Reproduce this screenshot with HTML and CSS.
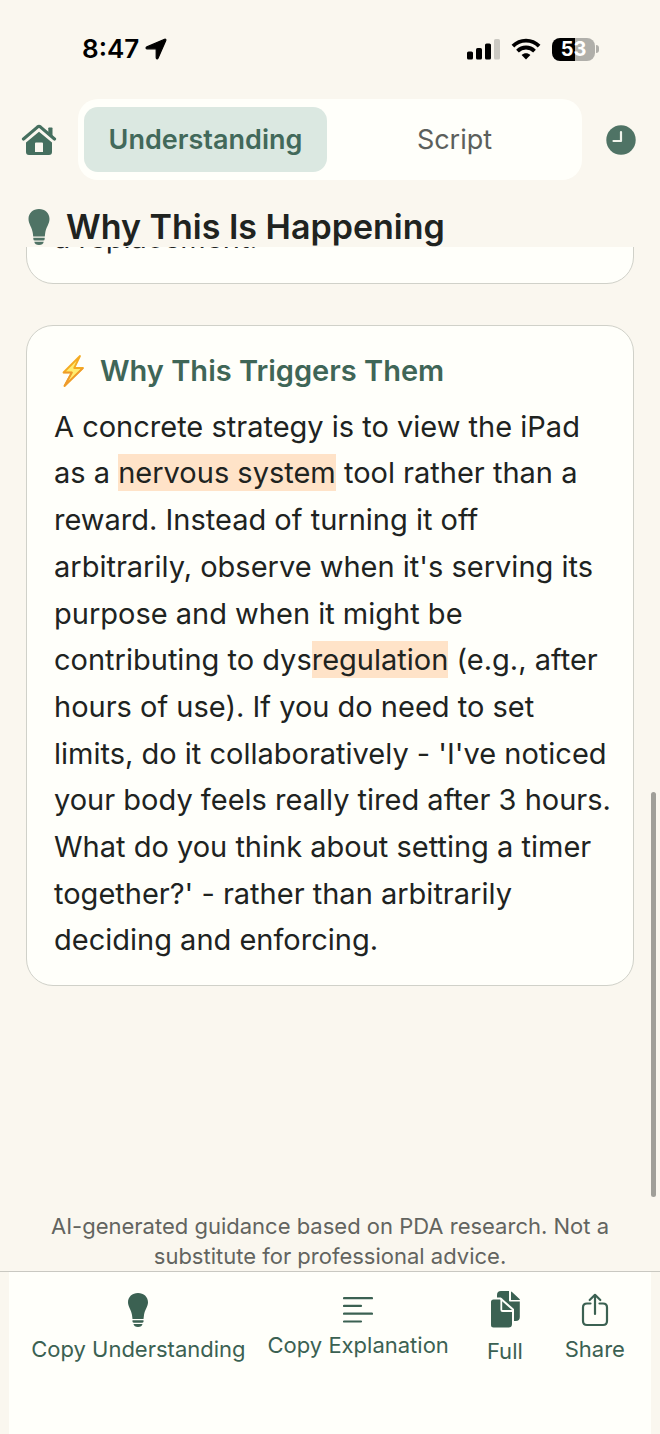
FILE: index.html
```html
<!DOCTYPE html>
<html lang="en">
<head>
<meta charset="utf-8">
<meta name="viewport" content="width=device-width, initial-scale=1">
<title>Why This Is Happening</title>
<link rel="stylesheet" href="styles.css">
</head>
<body>
<div class="app">
  <div class="status">
    <div class="status-group">
      <span class="time">8:47</span>
      <svg class="location" viewBox="0 0 22 22" width="22" height="22" aria-hidden="true"><path stroke="#000" stroke-width="1.200" stroke-linejoin="round" d="M19.600 1.200 1.900 8.900C.600 9.500.900 10.800 2.200 10.800H10.400c.5 0 .8.300.8.800V19.600c0 1.400 1.300 1.700 1.900.3L20.800 2.500C21.200 1.500 20.500.8 19.600 1.200Z"/></svg>
    </div>
    <div class="status-group status-right">
      <svg viewBox="0 0 33 21" width="33" height="21" aria-hidden="true"><rect x="0" y="12.500" width="6" height="8" rx="1.600"/><rect x="9" y="9" width="6" height="11.500" rx="1.600"/><rect x="18" y="4.500" width="6" height="16" rx="1.600"/><rect x="27" y="0" width="6" height="20.500" rx="1.600" fill="#cbc9c2"/></svg>
      <svg viewBox="0 0 30 22" width="30" height="22" aria-hidden="true"><g fill="none" stroke="#000" stroke-width="3.800"><path d="M1.900 8.100C9.200.800 20.800.800 28.100 8.100"/><path d="M6.500 13.100C11.300 8.300 18.700 8.300 23.500 13.100"/></g><path d="M10.600 17C13.200 14.600 16.800 14.600 19.400 17L15 21.500Z"/></svg>
      <div class="battery"><span class="battery-body">53</span><span class="battery-tip"></span></div>
    </div>
  </div>

  <nav class="topbar">
    <button class="icon-button" aria-label="Home">
      <svg viewBox="0 0 36 32" width="36" height="32" aria-hidden="true"><path fill="none" stroke="#456f5f" stroke-width="3.200" stroke-linecap="round" stroke-linejoin="round" d="M2.500 15 16.400 3.100Q18 1.800 19.600 3.100L33.500 15"/><path fill="#456f5f" d="M27.300 4.200q0-.8.8-.8h2.600q.8 0 .8.800v9l-4.200-3.600Z"/><path fill="#456f5f" fill-rule="evenodd" d="M18 7.800 31 18.500V28q0 3-3 3H8q-3 0-3-3V18.500ZM14 19.500v8.500h8v-8.500q0-1-1-1h-6q-1 0-1 1Z"/></svg>
    </button>
    <div class="tabs" role="tablist">
      <button class="tab tab-active" role="tab" aria-selected="true">Understanding</button>
      <button class="tab" role="tab" aria-selected="false">Script</button>
    </div>
    <button class="icon-button" aria-label="History">
      <svg viewBox="0 0 30 30" width="30" height="30" aria-hidden="true"><circle cx="15" cy="15" r="14.700" fill="#4f7365"/><path d="M15 7v9H7.500" fill="none" stroke="#f1f4ec" stroke-width="2.200" stroke-linecap="round" stroke-linejoin="round"/></svg>
    </button>
  </nav>

  <header class="heading">
    <svg viewBox="0 0 22 38" width="22" height="38" aria-hidden="true" fill="#4f7365"><path d="M11 1C5 1 .5 5 .5 11c0 5 3.500 8 4.300 14l.4 3.500h11.600l.4-3.500c.8-6 4.300-9 4.300-14C21.500 5 17 1 11 1Z"/><path d="M5.300 29.800h11.400v1.100q0 1.500-1.500 1.500H6.800q-1.500 0-1.500-1.500Z"/><path d="M6.300 33.800h9.400q-.6 3.200-4.700 3.200t-4.700-3.200Z"/></svg>
    <h1>Why This Is Happening</h1>
  </header>

  <main class="scroll">
    <section class="card"><p>a replacement.</p></section>
    <section class="card">
      <h2><svg viewBox="0 0 26 34" width="26" height="34" aria-hidden="true"><path d="M20 2 3.500 18.500h8.300L4.500 32 23 14h-8.800Z" fill="#ffec70" stroke="#f4ab22" stroke-width="1.800" stroke-linejoin="round"/><path d="M3.500 18.500h8.300L4.500 32 23 14" fill="none" stroke="#ee9a2d" stroke-width="1.600" stroke-linejoin="round"/></svg>Why This Triggers Them</h2>
      <p>A concrete strategy is to view the iPad as a <mark>nervous system</mark> tool rather than a reward. Instead of turning it off arbitrarily, observe when it's serving its purpose and when it might be contributing to dys<mark>regulation</mark> (e.g., after hours of use). If you do need to set limits, do it collaboratively - 'I've noticed your body feels really tired after 3 hours. What do you think about setting a timer together?' - rather than arbitrarily deciding and enforcing.</p>
    </section>
    <p class="disclaimer">AI-generated guidance based on PDA research. Not a substitute for professional advice.</p>
    <div class="scroll-thumb"></div>
  </main>

  <footer class="footer">
    <div class="actions">
      <button class="action">
        <svg viewBox="0 0 20 34" width="20" height="34" aria-hidden="true"><path d="M10 0C4.300 0 0 3.800 0 9.300c0 4.500 3.200 7.300 4 12.700l.5 4h11l.5-4c.8-5.400 4-8.200 4-12.700C20 3.800 15.700 0 10 0Z"/><path d="M4.500 27.300h11v1q0 1.500-1.500 1.500H6q-1.500 0-1.500-1.500Z"/><path d="M5.500 31h9q-.6 3-4.500 3t-4.500-3Z"/></svg>
        <span>Copy Understanding</span>
      </button>
      <button class="action">
        <svg viewBox="0 0 30 26" width="30" height="26" aria-hidden="true"><path d="M1 1.200h28M1 8.900h17M1 16.700h28M1 24.500h17" fill="none" stroke="#3b6152" stroke-width="2.200" stroke-linecap="round"/></svg>
        <span>Copy Explanation</span>
      </button>
      <button class="action">
        <svg viewBox="0 0 32 38" width="32" height="38" aria-hidden="true"><path d="M8 4q0-4 4-4h8v9.500q0 1 1 1h9.800V26q0 4-4 4H8Z"/><path d="M22 .6q.5 0 1 .5l7.500 7q.4.400.4.900H22Z"/><path d="M4.500 7.500H11.500L24 18.500V33q0 4.500-4.500 4.500H4.500Q1 37.500 1 34V11q0-3.500 3.500-3.500Z" stroke="#fffffa" stroke-width="2"/><path d="M12.300 7.500v11.200q0 1.300 1.300 1.300H24" fill="none" stroke="#fffffa" stroke-width="1.800"/></svg>
        <span>Full</span>
      </button>
      <button class="action">
        <svg viewBox="0 0 28 34" width="28" height="34" aria-hidden="true"><g fill="none" stroke="#3b6152" stroke-width="2.200" stroke-linecap="round" stroke-linejoin="round"><path d="M9.500 10.500H6q-4 0-4 4V28q0 4 4 4h16q4 0 4-4V14.500q0-4-4-4h-3.500"/><path d="M14 21V2M8.700 7 14 1.800 19.300 7"/></g></svg>
        <span>Share</span>
      </button>
    </div>
  </footer>
</div>
</body>
</html>
```
FILE: styles.css
```css
* { box-sizing: border-box; }

body {
  margin: 0;
  background: #faf7ef;
  color: #20231f;
  font-family: Inter, "Liberation Sans", sans-serif;
}

h1, h2, p { margin: 0; }

svg { display: block; flex: none; }

button {
  margin: 0;
  padding: 0;
  border: 0;
  background: none;
  font: inherit;
  color: inherit;
}

.app {
  display: flex;
  flex-direction: column;
  height: 100vh;
}

.status {
  display: flex;
  justify-content: space-between;
  align-items: center;
  padding: 32px 61px 0 82px;
}

.status-group {
  display: flex;
  align-items: center;
  gap: 6px;
}

.status-right { gap: 11px; }

.time {
  font-size: 26px;
  font-weight: 600;
  line-height: 34px;
  color: #000;
}

.battery {
  display: flex;
  align-items: center;
  gap: 1px;
}

.battery-body {
  width: 43px;
  border-radius: 8px;
  background: linear-gradient(90deg, #000 53%, #b0afaa 53%);
  color: #fff;
  font-size: 20px;
  font-weight: 700;
  line-height: 23px;
  text-align: center;
}

.battery-tip {
  width: 3px;
  height: 8px;
  border-radius: 0 3px 3px 0;
  background: #b0afaa;
}

.topbar {
  display: flex;
  align-items: center;
  gap: 21px;
  padding: 33px 21px 0;
}

.icon-button {
  display: flex;
  justify-content: center;
  width: 36px;
}

.tabs {
  display: flex;
  flex: 1;
  gap: 6px;
  padding: 8px 6px;
  border-radius: 20px;
  background: #fffffa;
}

.tab {
  flex: 1;
  border-radius: 14px;
  font-size: 27px;
  line-height: 65px;
  color: #5c605c;
}

.tab-active {
  background: #dbe8e1;
  color: #42695a;
  font-weight: 600;
}

.heading {
  display: flex;
  align-items: center;
  gap: 16px;
  padding: 27px 28px 1px;
}

h1 {
  font-size: 34px;
  font-weight: 600;
  line-height: 39px;
}

.scroll {
  position: relative;
  display: flex;
  flex: 1;
  flex-direction: column;
  justify-content: flex-end;
  gap: 41px;
  min-height: 0;
  overflow: hidden;
  padding: 0 26px;
}

.card {
  flex: none;
  padding: 23px 18px 21px 27px;
  border: 1px solid #d0d1c9;
  border-radius: 27px;
  background: #fffffa;
  font-size: 29px;
  line-height: 1.61;
}

h2 {
  display: flex;
  align-items: center;
  gap: 14px;
  padding: 0 6px 11px;
  font-size: 29px;
  font-weight: 600;
  line-height: 44px;
  color: #3f6657;
}

mark {
  padding: 1px 0;
  background: #ffe3c8;
  color: inherit;
}

.disclaimer {
  flex: none;
  padding: 184px 20px 0;
  font-size: 22px;
  line-height: 30px;
  text-align: center;
  color: #62645f;
}

.scroll-thumb {
  position: absolute;
  right: 4px;
  bottom: 74px;
  width: 5px;
  height: 405px;
  border-radius: 3px;
  background: #a09f99;
}

.footer {
  padding: 0 9px;
  border-top: 1px solid #c9c8c1;
}

.actions {
  display: flex;
  justify-content: center;
  align-items: center;
  padding: 19px 0 68px;
  background: #fffffa;
}

.action {
  display: flex;
  flex-direction: column;
  align-items: center;
  gap: 7px;
  min-width: 90px;
  padding: 0 11px;
  fill: #3b6152;
  font-size: 22px;
  line-height: 30px;
  color: #3b6152;
}
```
